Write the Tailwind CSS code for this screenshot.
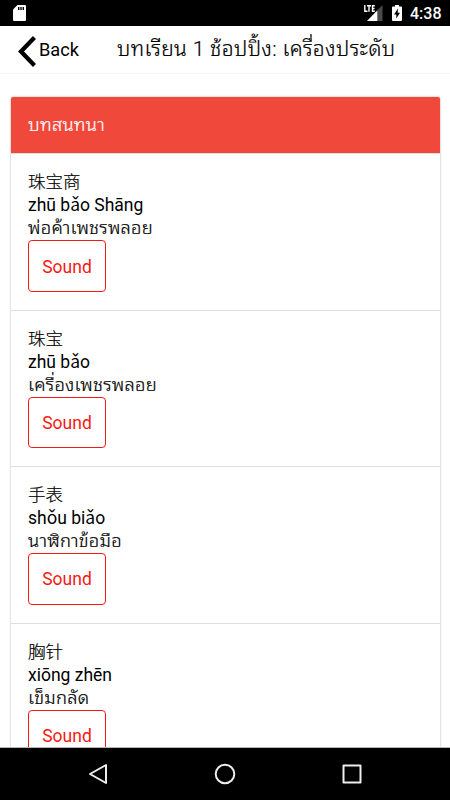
<!DOCTYPE html>
<html lang="th">
<head>
    <meta charset="UTF-8">
    <meta name="viewport" content="width=device-width, initial-scale=1.0">
    <title>บทเรียน 1</title>
    <script src="https://cdn.jsdelivr.net/npm/@tailwindcss/browser@4"></script>
</head>
<body class="h-[800px] flex flex-col overflow-hidden bg-white text-black font-['Roboto','Noto_Sans_CJK_SC','Noto_Sans_Thai_Looped','Noto_Looped_Thai','Loma','Waree','Garuda','Droid_Sans_Thai','Tlwg_Typo','Noto_Sans_Thai',sans-serif]">
    <!-- Status bar -->
    <div class="h-[26px] shrink-0 bg-black flex items-center pl-[13px] pr-[9px] text-white">
        <svg class="w-[13px] h-4" viewBox="0 0 13 16">
            <path d="M4.500 0H12q1 0 1 1v14q0 1-1 1H1q-1 0-1-1V4.500z" fill="#fff"/>
            <path d="M5.700 2v3M8 2v3M10.300 2v3" stroke="#000" stroke-width="1.400"/>
        </svg>
        <svg class="ml-auto w-[19px] h-4" viewBox="0 0 19 16">
            <path d="M18.500 0v16H3z" fill="#4a4a4a"/>
            <path d="M13.300 5.500V16H3z" fill="#fff"/>
            <path d="M0 0h11.500v7H0z" fill="#000"/>
            <path d="M.8 0v6.200h2.700M3 .8h4M5 .8v6M10.800.8H8.500v5.400h2.300M8.500 3.500h2" fill="none" stroke="#fff" stroke-width="1.400"/>
        </svg>
        <svg class="ml-[9px] w-[10px] h-4" viewBox="0 0 10 16">
            <path d="M3 0h4v1.500h2q1 0 1 1V15q0 1-1 1H1q-1 0-1-1V2.500q0-1 1-1h2z" fill="#fff"/>
            <path d="M6 3.500L2 9.500h2.300V13.500L8 7.700H5.700z" fill="#000"/>
        </svg>
        <span class="ml-2 w-[31px] text-[16px] leading-none font-medium whitespace-nowrap pt-0.5">4:38</span>
    </div>

    <!-- Toolbar -->
    <header class="h-[48px] shrink-0 flex items-center pl-[18px] border-b border-[#f4f4f4]">
        <svg class="w-[18px] h-[31px] mt-1" viewBox="0 0 18 31">
            <path d="M16.500 1.500L3 15.500l13.500 14" fill="none" stroke="#000" stroke-width="4.300"/>
        </svg>
        <span class="ml-[3px] w-[78px] text-[18.200px] pt-px">Back</span>
        <h1 class="text-[21px] font-light tracking-[0.36px] whitespace-nowrap [-webkit-text-stroke:0.2px]">บทเรียน 1 ช้อปปิ้ง: เครื่องประดับ</h1>
    </header>

    <!-- Vocabulary list -->
    <main class="flex-1 min-h-0 overflow-hidden pt-[23px] pl-[11px] pr-[10px]">
        <div class="rounded-t-[2px] shadow-[0_0_2px_rgba(0,0,0,0.4)] text-[17.500px] leading-[23px]">
            <h2 class="h-[56px] flex items-center px-[17px] pb-0.5 rounded-t-[2px] bg-[#f1483c] text-[18.400px] font-light tracking-[0.25px] text-white [-webkit-text-stroke:0.2px]">บทสนทนา</h2>
            <div class="h-[157px] border-t border-[#dedede] px-[17px] pt-[17px]">
                <p class="h-[23px] font-light [-webkit-text-stroke:0.2px]">珠宝商</p>
                <p class="h-[23px]">zhū bǎo Shāng</p>
                <p class="h-[23px] text-[18.400px] leading-[21px] font-light tracking-[0.25px] [-webkit-text-stroke:0.2px]">พ่อค้าเพชรพลอย</p>
                <button class="w-[78px] h-[52px] pt-0.5 border border-[#f51a14] rounded-[4px] text-[#f51a14]">Sound</button>
            </div>
            <div class="h-[156px] border-t border-[#dedede] px-[17px] pt-[17px]">
                <p class="h-[23px] font-light [-webkit-text-stroke:0.2px]">珠宝</p>
                <p class="h-[23px]">zhū bǎo</p>
                <p class="h-[23px] text-[18.400px] leading-[21px] font-light tracking-[0.25px] [-webkit-text-stroke:0.2px]">เครื่องเพชรพลอย</p>
                <button class="w-[78px] h-[51px] pt-px border border-[#f51a14] rounded-[4px] text-[#f51a14]">Sound</button>
            </div>
            <div class="h-[157px] border-t border-[#dedede] px-[17px] pt-[17px]">
                <p class="h-[23px] font-light [-webkit-text-stroke:0.2px]">手表</p>
                <p class="h-[23px]">shǒu biǎo</p>
                <p class="h-[23px] text-[18.400px] leading-[21px] font-light tracking-[0.25px] [-webkit-text-stroke:0.2px]">นาฬิกาข้อมือ</p>
                <button class="w-[78px] h-[52px] border border-[#f51a14] rounded-[4px] text-[#f51a14]">Sound</button>
            </div>
            <div class="h-[156px] border-t border-[#dedede] px-[17px] pt-[17px]">
                <p class="h-[23px] font-light [-webkit-text-stroke:0.2px]">胸针</p>
                <p class="h-[23px]">xiōng zhēn</p>
                <p class="h-[23px] text-[18.400px] leading-[21px] font-light tracking-[0.25px] [-webkit-text-stroke:0.2px]">เข็มกลัด</p>
                <button class="w-[78px] h-[52px] border border-[#f51a14] rounded-[4px] text-[#f51a14]">Sound</button>
            </div>
        </div>
    </main>

    <!-- Navigation bar -->
    <nav class="h-[53px] shrink-0 bg-black border-t border-[#b5b5b5] flex items-center pl-[88px]">
        <svg class="w-5 h-[22px]" viewBox="0 0 20 22" fill="none" stroke="#eee" stroke-width="2" stroke-linejoin="round">
            <path d="M18 2v18L2 11z"/>
        </svg>
        <svg class="ml-[106px] w-[22px] h-[22px]" viewBox="0 0 22 22" fill="none" stroke="#eee" stroke-width="2">
            <circle cx="11" cy="11" r="9.300"/>
        </svg>
        <svg class="ml-[105px] w-[22px] h-[22px]" viewBox="0 0 22 22" fill="none" stroke="#eee" stroke-width="2" stroke-linejoin="round">
            <path d="M2.500 2.500h17v17h-17z"/>
        </svg>
    </nav>
</body>
</html>
